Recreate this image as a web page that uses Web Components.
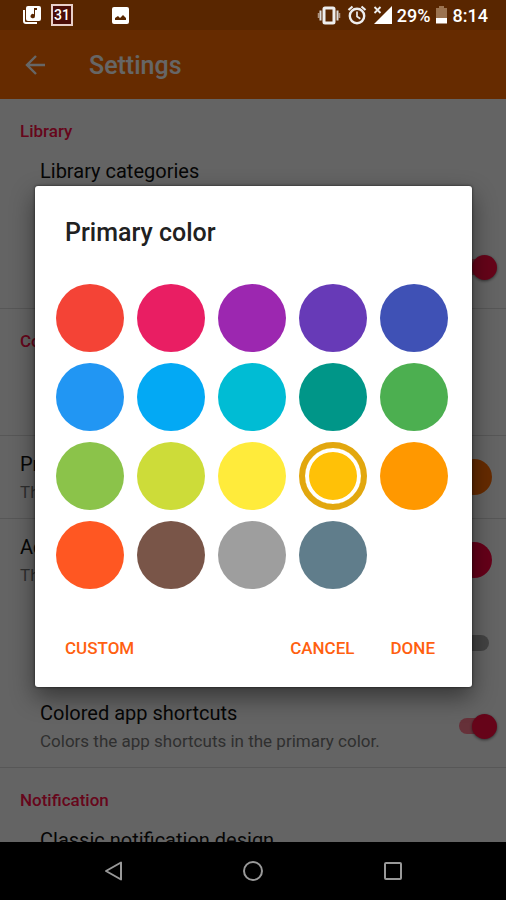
<!DOCTYPE html>
<html lang="en">
<head>
<meta charset="utf-8">
<meta name="viewport" content="width=device-width, initial-scale=1">
<title>Settings</title>
<style>
  html, body { margin: 0; height: 100%; }
  body { font-family: Roboto, "Noto Sans", sans-serif; background: #000; }
</style>
</head>
<body>
<settings-screen></settings-screen>
<script>
const define = (name, html, setup) => {
  const template = document.createElement('template');
  template.innerHTML = html;
  customElements.define(name, class extends HTMLElement {
    connectedCallback() {
      if (this.shadowRoot) return;
      this.attachShadow({ mode: 'open' }).append(template.content.cloneNode(true));
      if (setup) setup(this, this.shadowRoot);
    }
  });
};

define('status-bar', `
<style>
  :host { display: flex; align-items: center; height: 30px; padding: 0 18px 0 22px; background: #592600; color: #fff; flex: none; box-sizing: border-box; }
  div { display: flex; align-items: center; }
  .left { flex: 1; }
  .photo { margin-left: 38px; }
  .cal { margin-left: 8px; }
  .right { gap: 4px; font-size: 18px; line-height: 24px; font-weight: 500; padding-top: 2px; }
  svg { display: block; }
</style>
<div class="left">
  <svg width="20" height="20" viewBox="0 0 20 20"><path d="M2 5v11q0 2 2 2h11" fill="none" stroke="#fff" stroke-width="2"/><rect x="4" y="1" width="15" height="15" rx="2" fill="#fff"/><path d="M12 3h3v2h-2v6a2.200 2.200 0 1 1-1-1.800z" fill="#592600"/></svg>
  <svg class="cal" width="24" height="24" viewBox="0 0 24 24"><rect x="2" y="2" width="20" height="20" fill="#4a0d08" stroke="#e8cfc9" stroke-width="2"/><text x="12" y="17" text-anchor="middle" font-size="14" font-weight="500" fill="#fff">31</text></svg>
  <svg class="photo" width="18" height="18" viewBox="0 0 18 18"><rect x="0" y="1" width="17" height="17" rx="2" fill="#fff"/><path d="M3 14v-2l3-2 2 2 3-3 3 3v2z" fill="#592600"/></svg>
</div>
<div class="right">
  <svg width="24" height="22" viewBox="0 0 24 22"><rect x="7" y="3" width="10" height="15" rx="1" fill="none" stroke="#eee" stroke-width="3"/><path d="M3.500 5.500v10M20.500 5.500v10" stroke="#ddd" stroke-width="2"/><path d="M1.500 8v5M22.500 8v5" stroke="#fff" stroke-opacity=".5" stroke-width="1.500"/></svg>
  <svg width="24" height="22" viewBox="0 0 24 22"><circle cx="12" cy="11" r="7.200" fill="none" stroke="#eee" stroke-width="2.400"/><path d="M3.500 5l4-3.500M20.500 5l-4-3.500" stroke="#eee" stroke-width="2.200"/><path d="M12 6.500v5l3.300 2.200" fill="none" stroke="#eee" stroke-width="1.700"/></svg>
  <svg width="20" height="22" viewBox="0 0 20 22"><path d="M19 1v18H1z" fill="#fff"/><path d="M1 1h9v8H1z" fill="#592600"/><path d="M1.500 2l6 6M7.500 2l-6 6" stroke="#eee" stroke-width="1.800"/></svg>
  <span>29%</span>
  <svg width="14" height="22" viewBox="0 0 14 22"><path d="M4 1h5v2h3v10H1V3h3z" fill="#9b7350"/><path d="M1 13h11v5.500H1z" fill="#fff"/></svg>
  <span>8:14</span>
</div>`);

define('app-bar', `
<style>
  :host { display: flex; align-items: center; height: 69px; padding: 2px 24px 0; gap: 41px; background: #ff6d00; color: #fff; box-sizing: border-box; }
  button { all: unset; width: 24px; height: 24px; }
  svg { display: block; }
  h1 { margin: 0; font-size: 25px; line-height: 32px; font-weight: 500; }
</style>
<button aria-label="Back"><svg width="24" height="24" viewBox="0 0 24 24"><path d="M21 11H3M12 2l-9 9 9 9" fill="none" stroke="#fff" stroke-width="2.400"/></svg></button>
<h1><slot></slot></h1>`);

define('settings-section', `
<style>
  :host { display: block; border-bottom: 1px solid #dadada; }
  :host([plain]) { border: 0; }
  h2 { margin: 0; padding: 20px 20px 0; font-size: 17px; line-height: 24px; font-weight: 500; color: #ff0f48; }
</style>
<h2></h2><slot></slot>`, (host, root) => {
  const h = root.querySelector('h2');
  if (host.hasAttribute('heading')) h.textContent = host.getAttribute('heading'); else h.remove();
});

define('setting-row', `
<style>
  :host { display: flex; align-items: center; min-height: 83px; padding: 16px 14px 15px 40px; box-sizing: border-box; color: #111; }
  :host([flush]) { padding-left: 20px; }
  :host([last]) { min-height: 82px; padding-bottom: 14px; }
  .text { flex: 1; align-self: flex-start; }
  .name { font-size: 20px; line-height: 24px; }
  .note { margin-top: 4px; font-size: 17px; line-height: 24px; color: #777; }
</style>
<div class="text"><div class="name"><slot></slot></div><div class="note"><slot name="note"></slot></div></div>
<slot name="control"></slot>`);

define('toggle-switch', `
<style>
  :host { display: block; padding: 0 3px 3px 0; }
  input { appearance: none; display: block; position: relative; margin: 0; width: 30px; height: 16px; border-radius: 8px; background: #a8a8a8; }
  input::before { content: ""; position: absolute; top: -4px; left: -14px; width: 25px; height: 25px; border-radius: 50%; background: #f5f5f5; }
  input:checked { background: #ff7a90; }
  input:checked::before { left: 13px; background: #ff0a40; box-shadow: 0 1px 3px #0008; }
</style>
<input type="checkbox">`, (host, root) => {
  const box = root.querySelector('input');
  box.checked = host.hasAttribute('on');
  box.setAttribute('aria-label', host.getAttribute('label'));
});

define('color-dot', `
<style>
  :host { display: block; width: 36px; height: 36px; margin-bottom: 2px; border-radius: 50%; background: var(--dot); }
</style>`);

define('color-grid', `
<style>
  :host { display: grid; grid-template-columns: repeat(5, 1fr); gap: 11px 13px; }
  input { appearance: none; margin: 0; aspect-ratio: 1; border-radius: 50%; background: var(--c); }
  input:checked { border: 6px solid #e2a70e; background: var(--c) padding-box; box-shadow: inset 0 0 0 4px #fff; }
</style>`, (host, root) => {
  const colors = {
    Red: '#f44336', Pink: '#e91e63', Purple: '#9c27b0', 'Deep purple': '#673ab7', Indigo: '#3f51b5',
    Blue: '#2196f3', 'Light blue': '#03a9f4', Cyan: '#00bcd4', Teal: '#009688', Green: '#4caf50',
    'Light green': '#8bc34a', Lime: '#cddc39', Yellow: '#ffeb3b', Amber: '#ffc107', Orange: '#ff9800',
    'Deep orange': '#ff5722', Brown: '#795548', Grey: '#9e9e9e', 'Blue grey': '#607d8b'
  };
  for (const [name, value] of Object.entries(colors)) {
    const radio = document.createElement('input');
    radio.type = 'radio';
    radio.name = 'color';
    radio.checked = name === 'Amber';
    radio.setAttribute('aria-label', name);
    radio.style.setProperty('--c', value);
    root.append(radio);
  }
});

define('color-dialog', `
<style>
  :host { display: block; flex: 1; padding: 31px 0 19px; background: #fff; border-radius: 3px; box-shadow: 0 10px 24px #0007, 0 0 3px #000a; }
  h2 { margin: 0 30px 35px; font-size: 25px; line-height: 32px; font-weight: 500; color: #212121; }
  color-grid { margin: 0 24px 0 21px; }
  footer { display: flex; gap: 36px; margin: 39px 37px 0 30px; }
  button { appearance: none; border: 0; padding: 0; background: none; font: 500 17px/40px Roboto, sans-serif; color: #ff6010; }
  button:first-child { margin-right: auto; }
</style>
<h2><slot></slot></h2>
<color-grid role="radiogroup" aria-label="Primary color"></color-grid>
<footer><button>CUSTOM</button><button>CANCEL</button><button>DONE</button></footer>`);

define('nav-bar', `
<style>
  :host { display: flex; justify-content: center; align-items: center; gap: 116px; height: 58px; flex: none; background: #000; }
  button { all: unset; width: 24px; height: 24px; }
  svg { display: block; fill: none; stroke: #999; stroke-width: 2; }
</style>
<button aria-label="Back"><svg width="24" height="24" viewBox="0 0 24 24"><path d="M20 3.500v17L5 12z" stroke-linejoin="round"/></svg></button>
<button aria-label="Home"><svg width="24" height="24" viewBox="0 0 24 24"><circle cx="12" cy="12" r="9"/></svg></button>
<button aria-label="Recents"><svg width="24" height="24" viewBox="0 0 24 24"><rect x="4" y="4" width="16" height="16" rx="1"/></svg></button>`);

define('settings-screen', `
<style>
  :host { display: flex; flex-direction: column; height: 100vh; }
  main { position: relative; flex: 1; min-height: 0; overflow: hidden; background: #fafafa; }
  .scrim { position: absolute; inset: 0; display: flex; align-items: center; padding: 0 34px 0 35px; background: rgba(0, 0, 0, .6); }
</style>
<status-bar></status-bar>
<main>
  <app-bar>Settings</app-bar>
  <settings-section heading="Library">
    <setting-row>Library categories</setting-row>
    <setting-row last><toggle-switch slot="control" label="Library option" on></toggle-switch></setting-row>
  </settings-section>
  <settings-section heading="Colors">
    <setting-row last></setting-row>
  </settings-section>
  <settings-section>
    <setting-row flush last>Primary color<span slot="note">The primary color.</span><color-dot slot="control" style="--dot:#ff6d00"></color-dot></setting-row>
  </settings-section>
  <settings-section>
    <setting-row flush>Accent color<span slot="note">The accent color.</span><color-dot slot="control" style="--dot:#ff0040"></color-dot></setting-row>
    <setting-row><toggle-switch slot="control" label="Color option"></toggle-switch></setting-row>
    <setting-row last>Colored app shortcuts<span slot="note">Colors the app shortcuts in the primary color.</span><toggle-switch slot="control" label="Colored app shortcuts" on></toggle-switch></setting-row>
  </settings-section>
  <settings-section heading="Notification" plain>
    <setting-row>Classic notification design</setting-row>
  </settings-section>
  <div class="scrim"><color-dialog role="dialog" aria-label="Primary color">Primary color</color-dialog></div>
</main>
<nav-bar></nav-bar>`);
</script>
</body>
</html>
